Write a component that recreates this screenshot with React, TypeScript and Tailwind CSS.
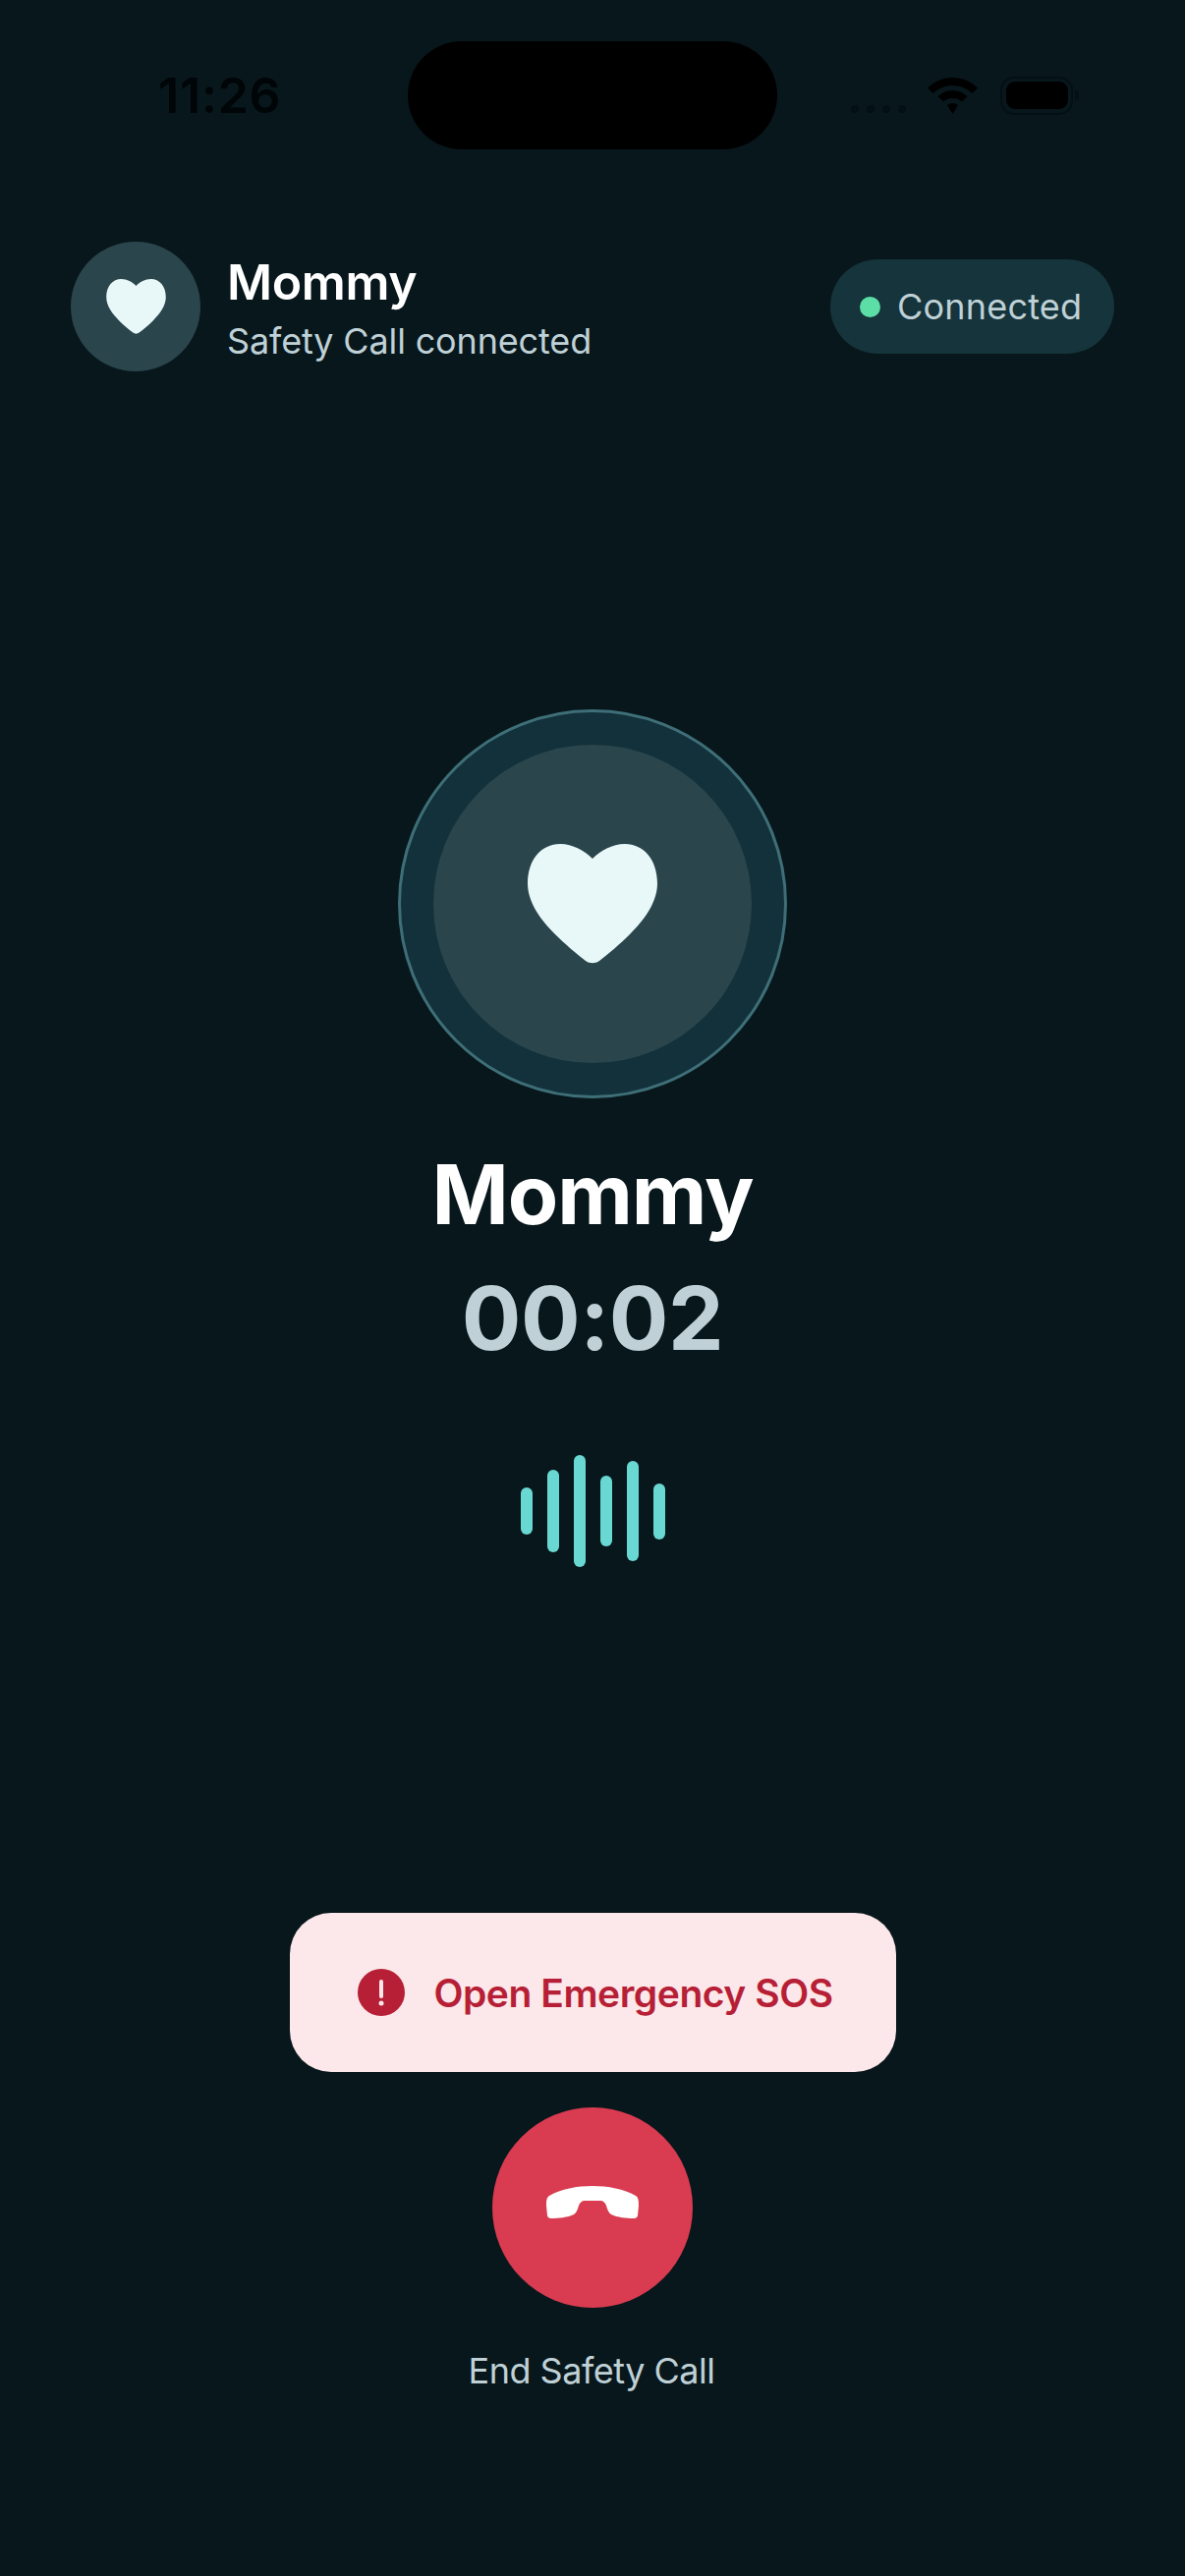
const barHeights = ['h-[48px]', 'h-[84px]', 'h-[114px]', 'h-[72px]', 'h-[102px]', 'h-[57px]'];

function Heart({ className }: { className: string }) {
  return (
    <svg viewBox="0 0 132 122" className={className} fill="#e8f8f8">
      <path d="M66 15C74 7 86 0 99 0C118 0 132 16 132 40C132 60 118 78 104 92C94 102 82 112 73 119C69 122 63 122 59 119C50 112 38 102 28 92C14 78 0 60 0 40C0 16 14 0 33 0C46 0 58 7 66 15Z" />
    </svg>
  );
}

function StatusBar() {
  return (
    <div className="flex h-[110px] items-center pl-[161px]">
      <span className="w-[254px] text-[50px] leading-[110px] font-semibold tracking-[0.8px] text-[#000507]">11:26</span>
      <div className="h-[110px] w-[376px] rounded-full bg-black" />
      <div className="ml-[75px] flex items-end gap-[8px] pb-[37px] pt-[65px]">
        {[0, 1, 2, 3].map((i) => (
          <span key={i} className="size-[8px] rounded-full bg-[#031014]" />
        ))}
      </div>
      <svg viewBox="0 0 51 37" className="ml-[22px] h-[37px] w-[51px]" fill="#000">
        <path d="M25.5 0C35 0 44 4 51 10.500L45.500 16C40 11 33 8 25.500 8C18 8 11 11 5.500 16L0 10.500C7 4 16 0 25.500 0Z" />
        <path d="M25.500 13C31 13 36 15 40.500 19L35 24.500C32 22 29 21 25.500 21C22 21 19 22 16 24.500L10.500 19C15 15 20 13 25.500 13Z" />
        <path d="M25.500 26C27.500 26 29.500 26.700 31 28L25.500 37L20 28C21.500 26.700 23.500 26 25.500 26Z" />
      </svg>
      <div className="ml-[23px] flex items-center">
        <div className="flex h-[39px] w-[74px] items-center justify-center rounded-[14px] border-2 border-[#031014]">
          <div className="h-[28px] w-[63px] rounded-[9px] bg-black" />
        </div>
        <div className="ml-[2px] h-[10px] w-[4px] rounded-r-full bg-[#031014]" />
      </div>
    </div>
  );
}

export default function App() {
  return (
    <div className="flex h-[2622px] w-[1206px] flex-col overflow-hidden bg-[#08171c] pt-[42px] font-['Inter',sans-serif]">
      <StatusBar />

      <header className="mt-[94px] flex h-[132px] items-center px-[72px]">
        <div className="flex size-[132px] items-center justify-center rounded-full bg-[#2a454c]">
          <Heart className="h-[56px] w-[61px]" />
        </div>
        <div className="ml-[27px] flex-1 pt-[2px]">
          <div className="text-[50px] leading-[60px] font-semibold tracking-[-0.4px] text-white">Mommy</div>
          <div className="mt-[8px] text-[36px] leading-[44px] tracking-[-0.15px] text-[#bfd1d6]">Safety Call connected</div>
        </div>
        <div className="flex h-[96px] w-[289px] items-center rounded-full bg-[#16343b] pl-[30px]">
          <span className="size-[21px] rounded-full bg-[#5cdfa6]" />
          <span className="ml-[17px] text-[36px] leading-[44px] tracking-[0.2px] text-[#bfd1d6]">Connected</span>
        </div>
      </header>

      <main className="flex flex-col items-center">
        <div className="mt-[344px] flex size-[396px] items-center justify-center rounded-full border-[3px] border-[#3e6f78] bg-[#13313a]">
          <div className="flex size-[324px] items-center justify-center rounded-full bg-[#2a454c]">
            <Heart className="h-[122px] w-[132px]" />
          </div>
        </div>
        <h1 className="mt-[48px] text-[84px] leading-[100px] font-bold tracking-[-1px] text-white">Mommy</h1>
        <div className="mt-[21px] text-[90px] leading-[110px] font-bold tracking-[-0.5px] text-[#bfd1d6]">00:02</div>

        <div className="mt-[84px] flex h-[114px] items-center gap-[15px]">
          {barHeights.map((h, i) => (
            <span key={i} className={`w-[12px] rounded-full bg-[#69d8d3] ${h}`} />
          ))}
        </div>

        <button className="mt-[352px] flex h-[162px] w-[617px] items-center justify-center gap-[29px] rounded-[42px] bg-[#fce8ea] pl-[6px]">
          <span className="flex size-[48px] items-center justify-center rounded-full bg-[#b71f36]">
            <svg viewBox="0 0 48 48" className="size-[48px]" fill="#fce8ea">
              <rect x="22" y="11" width="4" height="19" rx="2" />
              <circle cx="24" cy="35" r="2.500" />
            </svg>
          </span>
          <span className="pt-[2px] text-[39px] leading-[48px] font-semibold tracking-[-0.45px] text-[#b71f36]">Open Emergency SOS</span>
        </button>

        <button className="mt-[36px] flex size-[204px] items-center justify-center rounded-full bg-[#d93b50]">
          <svg viewBox="0 0 94 33" className="mb-[12px] h-[33px] w-[94px]" fill="#fff">
            <path d="M3 10C15 3 31 0 47 0C63 0 79 3 91 10C94 12 94 16 94 20L93 30C93 32 91 33 89 33C82 33 72 32 66 29C63 27 62 23 61 20C60 17 58 15 55 15L39 15C36 15 34 17 33 20C32 23 31 27 28 29C22 32 12 33 5 33C3 33 1 32 1 30L0 20C0 16 0 12 3 10Z" />
          </svg>
        </button>
        <div className="mt-[42px] pr-[2px] text-[36px] leading-[44px] tracking-[-0.5px] text-[#bfd1d6]">End Safety Call</div>
      </main>
    </div>
  );
}
